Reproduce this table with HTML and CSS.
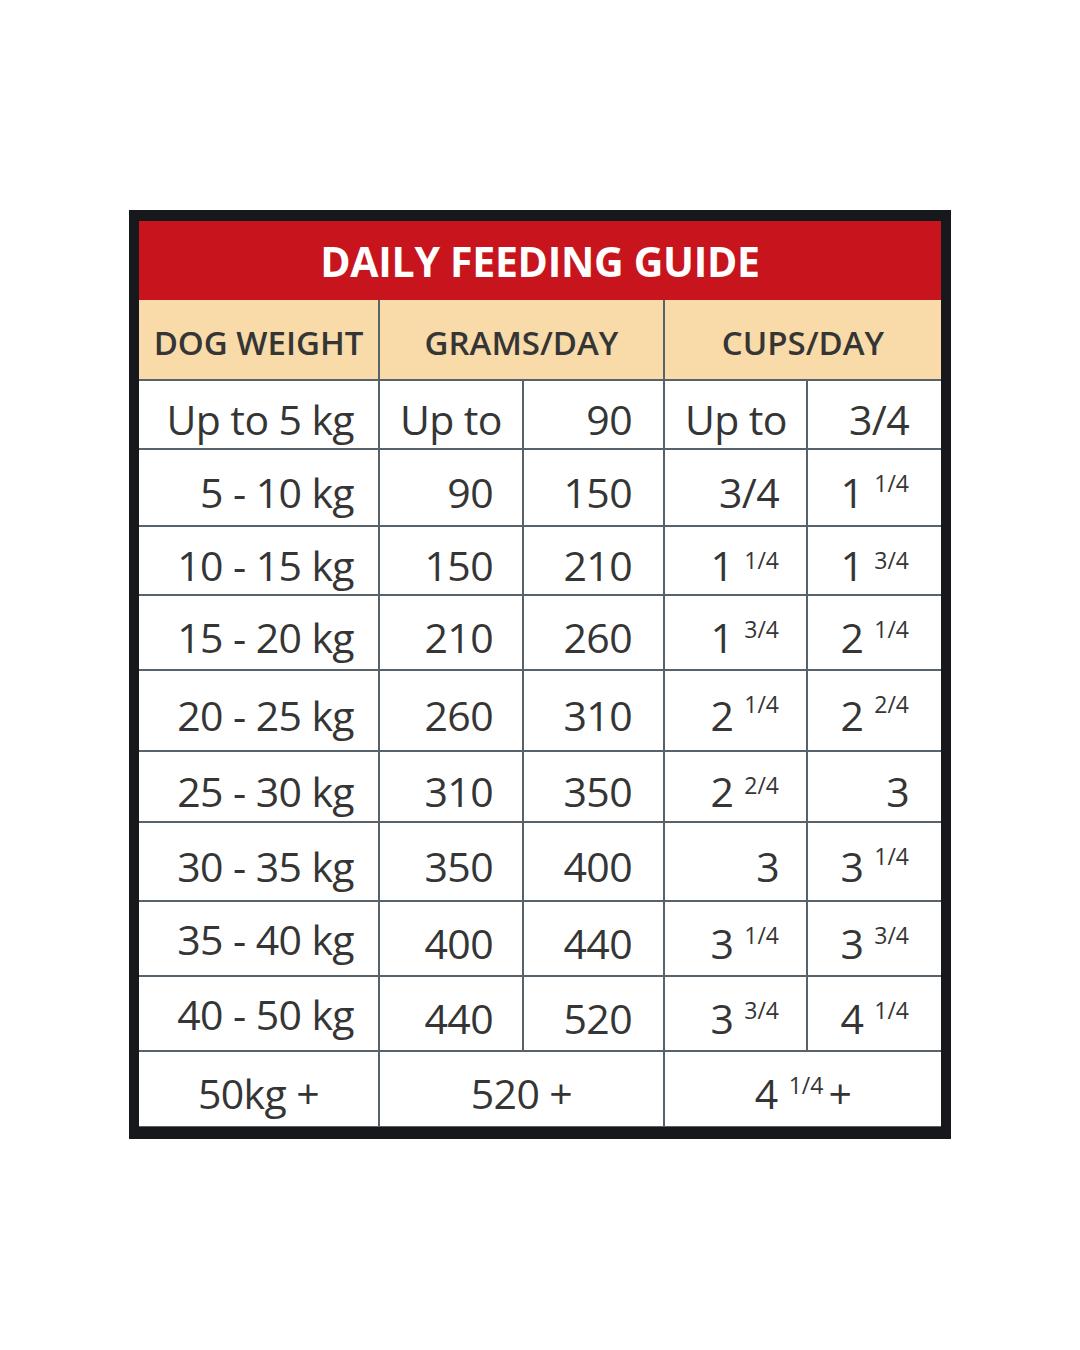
FILE: index.html
```html
<!DOCTYPE html>
<html>
<head>
<meta charset="utf-8">
<link rel="stylesheet" href="styles.css">
</head>
<body>
<div class="frame">
  <div class="title">DAILY FEEDING GUIDE</div>
  <div class="grid">
    <div class="hd">DOG WEIGHT</div>
    <div class="hd span2">GRAMS/DAY</div>
    <div class="hd span2">CUPS/DAY</div>

    <div class="c w">Up to 5 kg</div>
    <div class="c l">Up to</div>
    <div class="c g3">90</div>
    <div class="c l">Up to</div>
    <div class="c c5">3/4</div>

    <div class="c w">5 - 10 kg</div>
    <div class="c g2">90</div>
    <div class="c g3">150</div>
    <div class="c c4">3/4</div>
    <div class="c c5">1<sup>1/4</sup></div>

    <div class="c w">10 - 15 kg</div>
    <div class="c g2">150</div>
    <div class="c g3">210</div>
    <div class="c c4">1<sup>1/4</sup></div>
    <div class="c c5">1<sup>3/4</sup></div>

    <div class="c w">15 - 20 kg</div>
    <div class="c g2">210</div>
    <div class="c g3">260</div>
    <div class="c c4">1<sup>3/4</sup></div>
    <div class="c c5">2<sup>1/4</sup></div>

    <div class="c w">20 - 25 kg</div>
    <div class="c g2">260</div>
    <div class="c g3">310</div>
    <div class="c c4">2<sup>1/4</sup></div>
    <div class="c c5">2<sup>2/4</sup></div>

    <div class="c w">25 - 30 kg</div>
    <div class="c g2">310</div>
    <div class="c g3">350</div>
    <div class="c c4">2<sup>2/4</sup></div>
    <div class="c c5">3</div>

    <div class="c w">30 - 35 kg</div>
    <div class="c g2">350</div>
    <div class="c g3">400</div>
    <div class="c c4">3</div>
    <div class="c c5">3<sup>1/4</sup></div>

    <div class="c w up">35 - 40 kg</div>
    <div class="c g2">400</div>
    <div class="c g3">440</div>
    <div class="c c4">3<sup>1/4</sup></div>
    <div class="c c5">3<sup>3/4</sup></div>

    <div class="c w up">40 - 50 kg</div>
    <div class="c g2">440</div>
    <div class="c g3">520</div>
    <div class="c c4">3<sup>3/4</sup></div>
    <div class="c c5">4<sup>1/4</sup></div>

    <div class="c m">50kg +</div>
    <div class="c m span2">520 +</div>
    <div class="c m span2">4<sup>1/4</sup><span class="plus">+</span></div>
  </div>
</div>
</body>
</html>
```

FILE: styles.css
```css
html, body {
  margin: 0;
  padding: 0;
  background: #ffffff;
}

body {
  font-family: "Open Sans", "DejaVu Sans", sans-serif;
  color: #353535;
}

.frame {
  width: 802px;
  margin: 210px auto 0;
  border: 10px solid #16181c;
  border-top-width: 11px;
  border-bottom-width: 12px;
}

.title {
  height: 79px;
  background: #c8151d;
  color: #ffffff;
  font-weight: 700;
  font-size: 41px;
  display: flex;
  align-items: center;
  justify-content: center;
  letter-spacing: -0.3px;
}

.grid {
  display: grid;
  grid-template-columns: 239px 142px 139px 141px 133px;
  grid-template-rows: 79px 67px 75px 67px 73px 79px 69px 77px 73px 73px 74px;
  gap: 2px;
  background: #56626c;
  border-bottom: 1px solid #56626c;
}

.hd {
  background: #f8dba9;
  font-weight: 600;
  font-size: 33px;
  color: #353535;
  display: flex;
  align-items: center;
  justify-content: center;
  padding-top: 6px;
}

.span2 {
  grid-column: span 2;
}

.c {
  background: #ffffff;
  font-size: 41px;
  letter-spacing: -0.6px;
  display: flex;
  align-items: center;
  padding-top: 8px;
  white-space: nowrap;
}

.w {
  justify-content: flex-end;
  padding-right: 24px;
}

.w.up {
  padding-top: 0;
}

.g2 {
  justify-content: flex-end;
  padding-right: 29px;
}

.g3 {
  justify-content: flex-end;
  padding-right: 31px;
}

.c4 {
  justify-content: flex-end;
  padding-right: 27px;
}

.c5 {
  justify-content: flex-end;
  padding-right: 32px;
}

.l {
  justify-content: flex-start;
  padding-left: 20px;
}

.m {
  justify-content: center;
}

.plus {
  margin-left: 5px;
}

sup {
  font-size: 23px;
  letter-spacing: 0;
  margin-left: 11px;
  align-self: flex-start;
  line-height: 1;
  margin-top: 14px;
}
```
